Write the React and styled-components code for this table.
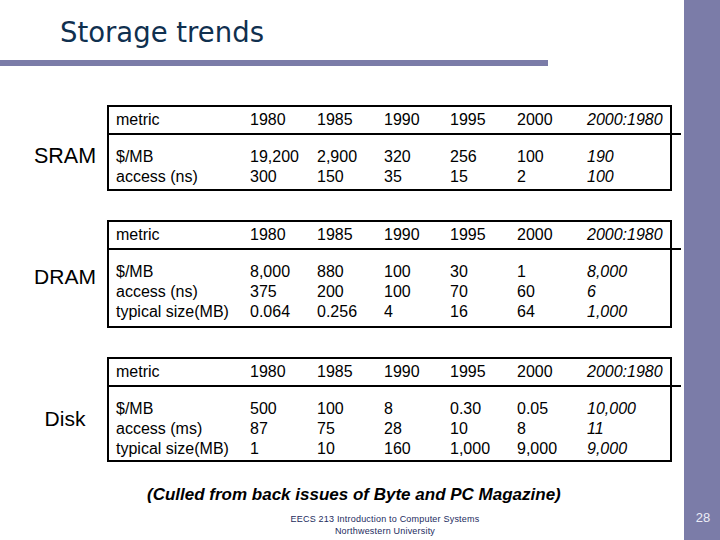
import React from 'react';
import styled, { createGlobalStyle } from 'styled-components';

const GlobalStyle = createGlobalStyle`
  html, body {
    margin: 0;
    padding: 0;
    background: #ffffff;
  }
`;

const accent = '#7b7ca8';

const Slide = styled.div`
  width: 720px;
  height: 540px;
  display: flex;
  overflow: hidden;
  background: #ffffff;
  font-family: 'Liberation Sans', Arial, sans-serif;
`;

const Main = styled.div`
  flex: 1;
  min-width: 0;
  display: flex;
  flex-direction: column;
`;

const Sidebar = styled.div`
  flex: 0 0 36px;
  background: ${accent};
  display: flex;
  flex-direction: column;
  justify-content: flex-end;
  align-items: center;
  padding-bottom: 15px;
  box-sizing: border-box;
`;

const PageNumber = styled.span`
  color: #ececf6;
  font-size: 13px;
  padding-left: 2px;
`;

const Title = styled.h1`
  margin: 0;
  padding: 14px 0 0 60px;
  font-family: 'DejaVu Sans', Verdana, sans-serif;
  font-weight: normal;
  font-size: 27.5px;
  line-height: 36px;
  color: #10304f;
`;

const TitleRule = styled.div`
  width: 548px;
  height: 6px;
  margin-top: 10px;
  background: ${accent};
`;

const Sections = styled.div`
  display: flex;
  flex-direction: column;
  gap: 29px;
  margin-top: 39px;
`;

const Section = styled.div`
  display: flex;
  align-items: flex-start;
`;

const DeviceLabel = styled.div`
  width: 94px;
  margin-left: 18px;
  padding-top: ${(p) => p.offset}px;
  text-align: center;
  font-size: ${(p) => p.size}px;
  line-height: 22px;
  color: #000000;
`;

const Box = styled.div`
  width: 565px;
  margin-left: -5px;
  box-sizing: border-box;
  border: 2px solid #000000;
  color: #000000;
`;

const Row = styled.div`
  display: grid;
  grid-template-columns: 134px 67px 67px 66px 67px 70px 1fr;
  padding-left: 7px;
  font-size: 16px;
  line-height: 20px;
`;

const HeaderRow = styled(Row)`
  position: relative;
  height: 28px;
  padding-top: 3px;
  box-sizing: border-box;
  border-bottom: 2px solid #000000;

  &::after {
    content: '';
    position: absolute;
    right: -11px;
    bottom: -2px;
    width: 11px;
    height: 2px;
    background: #000000;
  }
`;

const Body = styled.div`
  padding: ${(p) => p.top}px 0 ${(p) => p.bottom}px;
`;

const Cell = styled.span`
  font-style: ${(p) => (p.italic ? 'italic' : 'normal')};
  white-space: nowrap;
`;

const Note = styled.div`
  margin-top: 23px;
  padding-left: 147px;
  font-size: 17px;
  font-weight: bold;
  font-style: italic;
  color: #000000;
`;

const Footer = styled.div`
  margin-top: 8px;
  padding-left: 86px;
  text-align: center;
  font-size: 9px;
  line-height: 12px;
  letter-spacing: 0.2px;
  color: #1c2b5e;
`;

const years = ['1980', '1985', '1990', '1995', '2000', '2000:1980'];

const sections = [
  {
    name: 'SRAM',
    size: 21.5,
    offset: 40,
    top: 12,
    bottom: 2,
    rows: [
      ['$/MB', '19,200', '2,900', '320', '256', '100', '190'],
      ['access (ns)', '300', '150', '35', '15', '2', '100'],
    ],
  },
  {
    name: 'DRAM',
    size: 21,
    offset: 46,
    top: 12,
    bottom: 4,
    rows: [
      ['$/MB', '8,000', '880', '100', '30', '1', '8,000'],
      ['access (ns)', '375', '200', '100', '70', '60', '6'],
      ['typical size(MB)', '0.064', '0.256', '4', '16', '64', '1,000'],
    ],
  },
  {
    name: 'Disk',
    size: 21,
    offset: 51,
    top: 12,
    bottom: 1,
    rows: [
      ['$/MB', '500', '100', '8', '0.30', '0.05', '10,000'],
      ['access (ms)', '87', '75', '28', '10', '8', '11'],
      ['typical size(MB)', '1', '10', '160', '1,000', '9,000', '9,000'],
    ],
  },
];

const TrendTable = ({ section }) => (
  <Section>
    <DeviceLabel size={section.size} offset={section.offset}>
      {section.name}
    </DeviceLabel>
    <Box>
      <HeaderRow>
        <Cell>metric</Cell>
        {years.map((y, i) => (
          <Cell key={y} italic={i === years.length - 1}>
            {y}
          </Cell>
        ))}
      </HeaderRow>
      <Body top={section.top} bottom={section.bottom}>
        {section.rows.map((row) => (
          <Row key={row[0]}>
            {row.map((v, i) => (
              <Cell key={i} italic={i === row.length - 1}>
                {v}
              </Cell>
            ))}
          </Row>
        ))}
      </Body>
    </Box>
  </Section>
);

export default function App() {
  return (
    <>
      <GlobalStyle />
      <Slide>
        <Main>
          <Title>Storage trends</Title>
          <TitleRule />
          <Sections>
            {sections.map((s) => (
              <TrendTable key={s.name} section={s} />
            ))}
          </Sections>
          <Note>(Culled from back issues of Byte and PC Magazine)</Note>
          <Footer>
            EECS 213 Introduction to Computer Systems
            <br />
            Northwestern University
          </Footer>
        </Main>
        <Sidebar>
          <PageNumber>28</PageNumber>
        </Sidebar>
      </Slide>
    </>
  );
}
